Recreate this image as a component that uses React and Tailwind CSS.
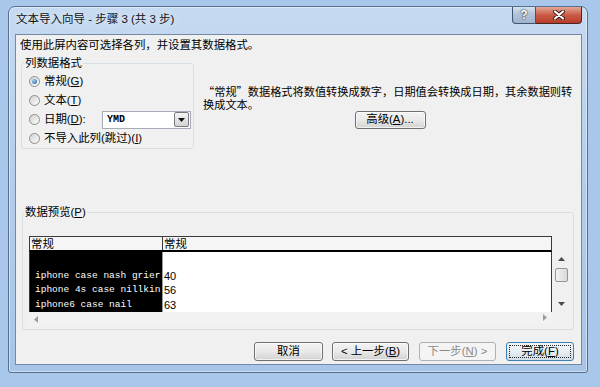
import React from "react";

const U = ({ children }) => (
  <span className="underline decoration-1 underline-offset-[1px]">{children}</span>
);

const Radio = ({ checked }) => (
  <span className="w-[11px] h-[11px] rounded-full border border-[#8d8d8d] bg-gradient-to-br from-[#d2d2d2] to-[#fdfdfd] flex items-center justify-center shrink-0">
    {checked && (
      <span className="w-[5px] h-[5px] rounded-full bg-[radial-gradient(circle_at_35%_35%,#9fd0f5,#1f5d97)]" />
    )}
  </span>
);

const Button = ({ children, className = "", disabled, primary }) => {
  if (primary) {
    return (
      <div
        className={`h-[19px] rounded-[3px] border border-[#3c7fb1] bg-gradient-to-b from-[#f1f5f9] via-[#e6edf3] to-[#d3dde6] p-[2px] ${className}`}
      >
        <div className="h-full border border-dotted border-[#222] flex items-center justify-center text-[11.4px] leading-none">
          {children}
        </div>
      </div>
    );
  }
  return (
    <div
      className={`h-[19px] rounded-[3px] border flex items-center justify-center text-[11.4px] leading-none ${
        disabled
          ? "border-[#adb2b5] bg-[#f4f4f4] text-[#8a8a8a]"
          : "border-[#707070] bg-gradient-to-b from-[#f3f3f3] via-[#e9e9e9] to-[#d2d2d2] shadow-[inset_0_0_0_1px_rgba(255,255,255,0.7)]"
      } ${className}`}
    >
      {children}
    </div>
  );
};

const rows = [
  ["", ""],
  ["iphone case nash grier", "40"],
  ["iphone 4s case nillkin", "56"],
  ["iphone6 case nail", "63"],
];

export default function App() {
  return (
    <div className="w-[600px] h-[387px] bg-[#a9c7eb] pt-[6px] pl-[8px] overflow-hidden font-['Liberation_Sans','Noto_Sans_CJK_SC',sans-serif] text-black">
      {/* window frame */}
      <div className="w-[580px] h-[367px] rounded-t-[7px] rounded-b-[3px] border border-[#566f8f] bg-gradient-to-b from-[#c6daf1] via-[#b2cdec] to-[#a8c5e8] shadow-[inset_0_0_0_1px_rgba(255,255,255,0.45)] flex flex-col pl-[6px] pr-[5px] pb-[7px]">
        {/* title bar */}
        <div className="h-[27px] flex justify-between items-start shrink-0">
          <div className="pt-[4px] pl-[1px] text-[11.5px] leading-[16px] text-[#111] [text-shadow:0_0_6px_rgba(255,255,255,0.9)]">
            文本导入向导 - 步骤 3 (共 3 步)
          </div>
          <div className="flex h-[17px]">
            <div className="w-[24px] h-full rounded-bl-[4px] border border-t-0 border-[#3f5570] bg-gradient-to-b from-[#d4e0ee] via-[#b0c2d8] to-[#9fb4cd] flex items-center justify-center">
              <span className="text-[12px] font-bold leading-none text-white [text-shadow:0_0_2px_#1d2c3f,0_0_1px_#1d2c3f]">
                ?
              </span>
            </div>
            <div className="w-[46px] h-full rounded-br-[4px] border border-l-0 border-t-0 border-[#4a2620] bg-gradient-to-b from-[#e3a797] via-[#c95b47] to-[#b73b2a] flex items-center justify-center">
              <svg width="12" height="10" viewBox="0 0 12 10">
                <path d="M2 1.5 L10 8.5 M10 1.5 L2 8.5" stroke="#3b1712" strokeWidth="4" strokeLinecap="round" />
                <path d="M2 1.5 L10 8.5 M10 1.5 L2 8.5" stroke="#fff" strokeWidth="2.2" strokeLinecap="round" />
              </svg>
            </div>
          </div>
        </div>

        {/* client area */}
        <div className="flex-1 bg-[#f0f0f0] border border-[#7389a4] flex flex-col">
          <div className="pt-[3px] pl-[4px] text-[11.4px] leading-[14px]">
            使用此屏内容可选择各列，并设置其数据格式。
          </div>

          <div className="mt-[4px] flex items-start">
            <fieldset className="ml-[5px] w-[173px] border border-[#d5dfe5] rounded-[3px]">
              <legend className="ml-[2px] px-[1px] text-[11.4px] leading-[14px]">列数据格式</legend>
              <div className="pt-[2px] pl-[7px] text-[11.4px]">
                <div className="h-[19px] flex items-center gap-[4px]">
                  <Radio checked />
                  <span>
                    常规(<U>G</U>)
                  </span>
                </div>
                <div className="h-[19px] flex items-center gap-[4px]">
                  <Radio />
                  <span>
                    文本(<U>T</U>)
                  </span>
                </div>
                <div className="h-[19px] flex items-center gap-[4px]">
                  <Radio />
                  <span className="w-[54px]">
                    日期(<U>D</U>):
                  </span>
                  <div className="w-[89px] h-[18px] border border-[#a5acb5] bg-white flex items-center justify-between pl-[4px] pr-px">
                    <span className="font-['Liberation_Mono',monospace] font-bold text-[10px] leading-none">YMD</span>
                    <div className="w-[15px] h-[15px] rounded-[2px] border border-[#7a7a7a] bg-gradient-to-b from-[#f4f4f4] to-[#d4d4d4] flex items-center justify-center">
                      <svg width="7" height="4" viewBox="0 0 7 4">
                        <path d="M0 0 H7 L3.5 4 Z" fill="#111" />
                      </svg>
                    </div>
                  </div>
                </div>
                <div className="h-[19px] flex items-center gap-[4px]">
                  <Radio />
                  <span>
                    不导入此列(跳过)(<U>I</U>)
                  </span>
                </div>
              </div>
            </fieldset>

            <div className="ml-[9px] w-[374px] pt-[29px]">
              <p className="text-[11.2px] leading-[13px] font-['Noto_Sans_CJK_SC',sans-serif]">
                “常规”数据格式将数值转换成数字，日期值会转换成日期，其余数据则转换成文本。
              </p>
              <Button className="mx-auto w-[71px] !h-[18px]">
                高级(<U>A</U>)...
              </Button>
            </div>
          </div>

          {/* data preview */}
          <fieldset className="mt-[56px] ml-[6px] w-[552px] border border-[#d5dfe5] rounded-[3px]">
            <legend className="ml-[1px] px-[1px] text-[11.4px] leading-[14px]">
              数据预览(<U>P</U>)
            </legend>
            <div className="pt-[17px] pl-[6px] pb-[3px] flex">
              <div className="w-[523px]">
                <div className="h-[16px] flex border-t border-l border-r border-b-2 border-[#3a3a3a] border-b-black bg-[#f5f5f5] text-[11.4px] leading-[13px]">
                  <div className="w-[133px] border-r border-[#3a3a3a] pl-px pt-px">常规</div>
                  <div className="flex-1 pl-px pt-px">常规</div>
                </div>
                <div className="h-[60px] flex border-l border-r border-[#3a3a3a] overflow-hidden">
                  <div className="w-[132px] bg-black pt-[2px] pl-[5px]">
                    {rows.map((r, i) => (
                      <div
                        key={i}
                        className="h-[14.5px] leading-[14.5px] font-['Liberation_Mono',monospace] text-[9.5px] text-white whitespace-nowrap"
                      >
                        {r[0]}
                      </div>
                    ))}
                  </div>
                  <div className="w-px bg-[#9a9a9a]" />
                  <div className="flex-1 bg-white pt-[2px] pl-px">
                    {rows.map((r, i) => (
                      <div key={i} className="h-[14.5px] leading-[14.5px] text-[11px]">
                        {r[1]}
                      </div>
                    ))}
                  </div>
                </div>
                <div className="h-[14px] flex items-center justify-between bg-[#f2f2f2]">
                  <div className="w-[14px] flex justify-center">
                    <svg width="4" height="7" viewBox="0 0 4 7">
                      <path d="M4 0 V7 L0 3.5 Z" fill="#9c9c9c" />
                    </svg>
                  </div>
                  <div className="w-[14px] flex justify-center -translate-y-[2px]">
                    <svg width="4" height="7" viewBox="0 0 4 7">
                      <path d="M0 0 V7 L4 3.5 Z" fill="#9c9c9c" />
                    </svg>
                  </div>
                </div>
              </div>
              <div className="w-[18px] pt-[16px]">
                <div className="h-[60px] flex flex-col items-center pb-[3px]">
                  <div className="h-[14px] flex items-center">
                    <svg width="7" height="4" viewBox="0 0 7 4">
                      <path d="M0 4 H7 L3.5 0 Z" fill="#4a4a4a" />
                    </svg>
                  </div>
                  <div className="mt-[2px] w-[13px] h-[14px] rounded-[2px] border border-[#959595] bg-gradient-to-r from-[#f2f2f2] to-[#dadada]" />
                  <div className="flex-1" />
                  <div className="h-[11px] flex items-center">
                    <svg width="7" height="4" viewBox="0 0 7 4">
                      <path d="M0 0 H7 L3.5 4 Z" fill="#4a4a4a" />
                    </svg>
                  </div>
                </div>
              </div>
            </div>
          </fieldset>

          {/* buttons */}
          <div className="mt-[12px] flex justify-end pr-[7px]">
            <Button className="w-[69px]">取消</Button>
            <Button className="ml-[9px] w-[77px]">
              &lt; 上一步(<U>B</U>)
            </Button>
            <Button className="ml-[10px] w-[77px]" disabled>
              下一步(<U>N</U>) &gt;
            </Button>
            <Button className="ml-[10px] w-[68px]" primary>
              完成(<U>F</U>)
            </Button>
          </div>
        </div>
      </div>
    </div>
  );
}
